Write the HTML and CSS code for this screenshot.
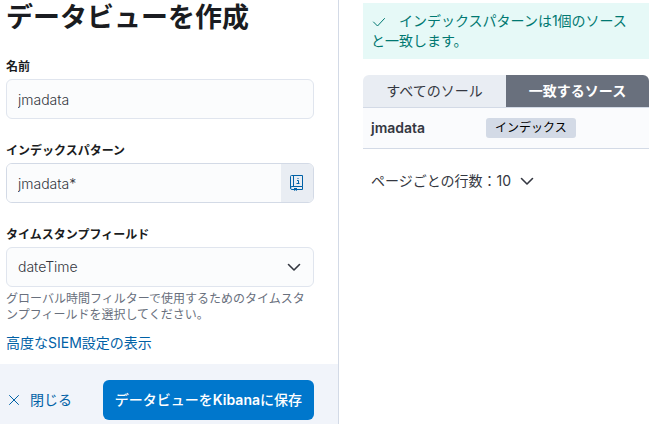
FILE: index.html
```html
<!DOCTYPE html>
<html lang="ja">
<head>
    <meta charset="UTF-8">
    <meta name="viewport" content="width=device-width, initial-scale=1.0">
    <title>データビューを作成</title>
    <link rel="stylesheet" href="styles.css">
</head>
<body>
    <div class="flyout">
        <form class="editor" onsubmit="return false">
            <div class="editor-body">
                <h1>データビューを作成</h1>

                <div class="form-row">
                    <label for="name">名前</label>
                    <input class="field" type="text" id="name" value="jmadata">
                </div>

                <div class="form-row">
                    <label for="pattern">インデックスパターン</label>
                    <div class="field-group">
                        <input class="field" type="text" id="pattern" value="jmadata*">
                        <button type="button" class="append-btn" aria-label="ヘルプ">
                            <svg width="16" height="16" viewBox="0 0 16 16" fill="none" stroke="currentColor">
                                <path d="M5 14.500H3A1.500 1.500 0 0 1 1.500 13V1.500a1 1 0 0 1 1-1h11v11H3a1.500 1.500 0 0 0-1.500 1.500M4.500 .5v11M8 14.500h5.500v-3"/>
                                <path d="M8 5.500h1.500v3M7.500 8.500h3M8.500 3.500h1"/>
                                <path d="M5 13h3v3l-1.500-1L5 16z" fill="currentColor" stroke="none"/>
                            </svg>
                        </button>
                    </div>
                </div>

                <div class="form-row">
                    <label for="timestamp">タイムスタンプフィールド</label>
                    <div class="select-wrap">
                        <select class="field" id="timestamp">
                            <option>dateTime</option>
                        </select>
                        <svg class="select-arrow" width="16" height="16" viewBox="0 0 16 16" fill="none" stroke="currentColor" stroke-width="1.600" stroke-linecap="round" stroke-linejoin="round">
                            <path d="M2.500 5.500L8 11l5.500-5.500"/>
                        </svg>
                    </div>
                    <p class="help-text">グローバル時間フィルターで使用するためのタイムスタンプフィールドを選択してください。</p>
                </div>

                <a class="link" href="#">高度なSIEM設定の表示</a>
            </div>

            <div class="footer">
                <button type="button" class="close-btn">
                    <svg width="16" height="16" viewBox="0 0 16 16" fill="none" stroke="currentColor" stroke-linecap="round">
                        <path d="M3.500 3.500l9 9M12.500 3.500l-9 9"/>
                    </svg>
                    閉じる
                </button>
                <button type="submit" class="save-btn">データビューを<strong>Kibana</strong>に保存</button>
            </div>
        </form>

        <div class="preview">
            <div class="callout">
                <svg class="callout-icon" width="16" height="16" viewBox="0 0 16 16" fill="none" stroke="currentColor" stroke-linecap="round" stroke-linejoin="round">
                    <path d="M2.500 8L6.500 12l7-7.500"/>
                </svg>インデックスパターンは1個のソースと一致します。
            </div>

            <div class="tabs">
                <button type="button" class="tab">すべてのソール</button>
                <button type="button" class="tab active">一致するソース</button>
            </div>

            <table class="sources">
                <tr>
                    <td class="source-name">jmadata</td>
                    <td><span class="badge">インデックス</span></td>
                </tr>
            </table>

            <button type="button" class="rows-btn">
                ページごとの行数：10
                <svg width="16" height="16" viewBox="0 0 16 16" fill="none" stroke="currentColor" stroke-width="1.600" stroke-linecap="round" stroke-linejoin="round">
                    <path d="M2.500 5.500L8 11l5.500-5.500"/>
                </svg>
            </button>
        </div>
    </div>
</body>
</html>
```
FILE: styles.css
```css
* {
    box-sizing: border-box;
}
body {
    margin: 0;
    font-family: Inter, "Noto Sans CJK JP", sans-serif;
    font-size: 14px;
    line-height: 20px;
    color: #343741;
    background: #fff;
}
input, button, select {
    font: inherit;
    color: inherit;
    margin: 0;
}
button {
    border: none;
    background: none;
    padding: 0;
    cursor: pointer;
}
svg {
    flex-shrink: 0;
}
.flyout {
    display: grid;
    grid-template-columns: minmax(0, 1fr) 312px;
    min-height: 100vh;
}
.editor {
    display: flex;
    flex-direction: column;
    border-right: 1px solid #d3dae6;
}
.editor-body {
    padding: 0 24px 11px 6px;
}
h1 {
    margin: 0 0 22px;
    font-size: 27px;
    line-height: 36px;
    font-weight: 700;
    color: #1a1c21;
}
.form-row {
    margin-bottom: 23px;
}
.form-row:last-of-type {
    margin-bottom: 10px;
}
label {
    display: block;
    margin-bottom: 3px;
    font-size: 12px;
    line-height: 18px;
    font-weight: 600;
    color: #1a1c21;
}
.field {
    display: block;
    width: 100%;
    height: 40px;
    padding: 0 11px;
    border: 1px solid #e0e5ee;
    border-radius: 6px;
    background: #fbfcfd;
    font-weight: 300;
    appearance: none;
}
.field-group {
    display: flex;
    height: 40px;
    border: 1px solid #d3dae6;
    border-radius: 6px;
    overflow: hidden;
}
.field-group .field {
    flex: 1;
    min-width: 0;
    height: 100%;
    border: none;
    border-radius: 0;
}
.append-btn {
    display: flex;
    align-items: center;
    justify-content: center;
    width: 32px;
    background: #e9edf3;
    color: #0061a6;
}
.select-wrap {
    position: relative;
}
.select-arrow {
    position: absolute;
    top: 12px;
    right: 12px;
    pointer-events: none;
}
.help-text {
    margin: 4px 0 0;
    font-size: 12px;
    line-height: 16px;
    color: #69707d;
}
.link {
    display: block;
    color: #0061a6;
    text-decoration: none;
}
.footer {
    flex: 1;
    display: flex;
    justify-content: space-between;
    align-items: flex-start;
    padding: 16px 24px 4px 6px;
    background: #f1f4fa;
}
.close-btn {
    display: flex;
    align-items: center;
    gap: 8px;
    height: 40px;
    color: #0061a6;
}
.save-btn {
    height: 40px;
    padding: 0 12px;
    border-radius: 6px;
    background: #07c;
    color: #fff;
    font-weight: 500;
}
.save-btn strong {
    font-weight: 600;
}
.preview {
    padding: 3px 2px 0 24px;
}
.callout {
    padding: 8px 16px 8px 8px;
    background: #e6f9f7;
    color: #007871;
}
.callout-icon {
    margin-right: 12px;
    vertical-align: middle;
}
.tabs {
    display: grid;
    grid-template-columns: 1fr 1fr;
    margin-top: 16px;
    border-radius: 6px 6px 0 0;
    overflow: hidden;
}
.tab {
    height: 32px;
    background: #e9edf3;
}
.tab.active {
    background: #69707d;
    color: #fff;
    font-weight: 700;
}
.sources {
    width: 100%;
    border-collapse: collapse;
    border-top: 1px solid #d3dae6;
    border-bottom: 1px solid #d3dae6;
    background: #fafbfd;
}
.sources td {
    height: 41px;
    padding: 0 8px;
}
.sources .source-name {
    width: 115px;
    font-weight: 600;
}
.badge {
    display: block;
    width: fit-content;
    padding: 0 9px;
    border-radius: 3px;
    background: #d3dae6;
    font-size: 12px;
    color: #000;
}
.rows-btn {
    display: flex;
    align-items: center;
    gap: 8px;
    margin: 22px 8px 0;
}
```
